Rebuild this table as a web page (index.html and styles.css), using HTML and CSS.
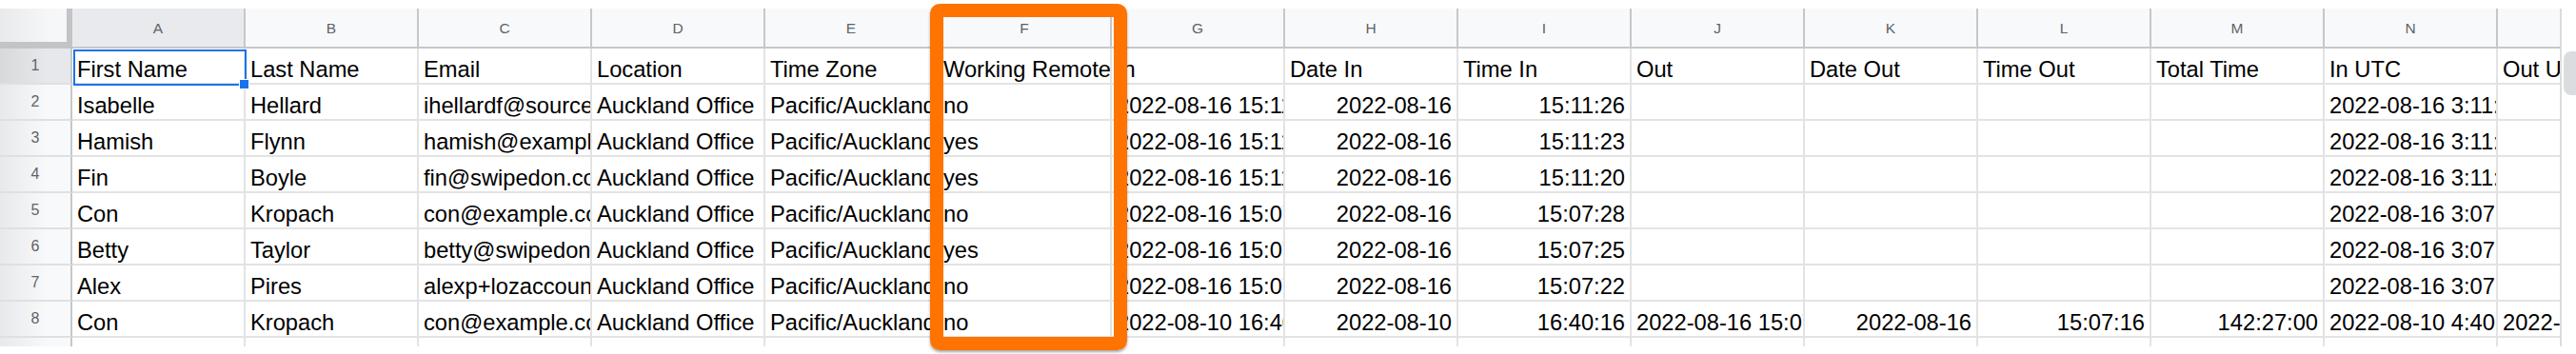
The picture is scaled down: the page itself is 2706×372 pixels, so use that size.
FILE: index.html
```html
<!DOCTYPE html>
<html lang="en">
<head>
<meta charset="utf-8">
<title>Visitor log</title>
<link rel="stylesheet" href="styles.css">
</head>
<body>
<div class="page">
  <div class="grid">
    <div class="row head">
      <div class="corner"></div>
      <div class="colhead sel">A</div>
      <div class="colhead">B</div>
      <div class="colhead">C</div>
      <div class="colhead">D</div>
      <div class="colhead">E</div>
      <div class="colhead">F</div>
      <div class="colhead">G</div>
      <div class="colhead">H</div>
      <div class="colhead">I</div>
      <div class="colhead">J</div>
      <div class="colhead">K</div>
      <div class="colhead">L</div>
      <div class="colhead">M</div>
      <div class="colhead">N</div>
      <div class="colhead">O</div>
    </div>

    <div class="row">
      <div class="rowhead sel">1</div>
      <div class="cell">First Name</div>
      <div class="cell">Last Name</div>
      <div class="cell">Email</div>
      <div class="cell">Location</div>
      <div class="cell">Time Zone</div>
      <div class="cell">Working Remote</div>
      <div class="cell">In</div>
      <div class="cell">Date In</div>
      <div class="cell">Time In</div>
      <div class="cell">Out</div>
      <div class="cell">Date Out</div>
      <div class="cell">Time Out</div>
      <div class="cell">Total Time</div>
      <div class="cell">In UTC</div>
      <div class="cell">Out UTC</div>
    </div>

    <div class="row">
      <div class="rowhead">2</div>
      <div class="cell">Isabelle</div>
      <div class="cell">Hellard</div>
      <div class="cell">ihellardf@sourceforge.net</div>
      <div class="cell">Auckland Office</div>
      <div class="cell">Pacific/Auckland</div>
      <div class="cell">no</div>
      <div class="cell">2022-08-16 15:11:26</div>
      <div class="cell num">2022-08-16</div>
      <div class="cell num">15:11:26</div>
      <div class="cell"></div>
      <div class="cell"></div>
      <div class="cell"></div>
      <div class="cell"></div>
      <div class="cell">2022-08-16 3:11:26</div>
      <div class="cell"></div>
    </div>

    <div class="row">
      <div class="rowhead">3</div>
      <div class="cell">Hamish</div>
      <div class="cell">Flynn</div>
      <div class="cell">hamish@example.com</div>
      <div class="cell">Auckland Office</div>
      <div class="cell">Pacific/Auckland</div>
      <div class="cell">yes</div>
      <div class="cell">2022-08-16 15:11:23</div>
      <div class="cell num">2022-08-16</div>
      <div class="cell num">15:11:23</div>
      <div class="cell"></div>
      <div class="cell"></div>
      <div class="cell"></div>
      <div class="cell"></div>
      <div class="cell">2022-08-16 3:11:23</div>
      <div class="cell"></div>
    </div>

    <div class="row">
      <div class="rowhead">4</div>
      <div class="cell">Fin</div>
      <div class="cell">Boyle</div>
      <div class="cell">fin@swipedon.com</div>
      <div class="cell">Auckland Office</div>
      <div class="cell">Pacific/Auckland</div>
      <div class="cell">yes</div>
      <div class="cell">2022-08-16 15:11:20</div>
      <div class="cell num">2022-08-16</div>
      <div class="cell num">15:11:20</div>
      <div class="cell"></div>
      <div class="cell"></div>
      <div class="cell"></div>
      <div class="cell"></div>
      <div class="cell">2022-08-16 3:11:20</div>
      <div class="cell"></div>
    </div>

    <div class="row">
      <div class="rowhead">5</div>
      <div class="cell">Con</div>
      <div class="cell">Kropach</div>
      <div class="cell">con@example.com</div>
      <div class="cell">Auckland Office</div>
      <div class="cell">Pacific/Auckland</div>
      <div class="cell">no</div>
      <div class="cell">2022-08-16 15:07:28</div>
      <div class="cell num">2022-08-16</div>
      <div class="cell num">15:07:28</div>
      <div class="cell"></div>
      <div class="cell"></div>
      <div class="cell"></div>
      <div class="cell"></div>
      <div class="cell">2022-08-16 3:07</div>
      <div class="cell"></div>
    </div>

    <div class="row">
      <div class="rowhead">6</div>
      <div class="cell">Betty</div>
      <div class="cell">Taylor</div>
      <div class="cell">betty@swipedon.com</div>
      <div class="cell">Auckland Office</div>
      <div class="cell">Pacific/Auckland</div>
      <div class="cell">yes</div>
      <div class="cell">2022-08-16 15:07:25</div>
      <div class="cell num">2022-08-16</div>
      <div class="cell num">15:07:25</div>
      <div class="cell"></div>
      <div class="cell"></div>
      <div class="cell"></div>
      <div class="cell"></div>
      <div class="cell">2022-08-16 3:07</div>
      <div class="cell"></div>
    </div>

    <div class="row">
      <div class="rowhead">7</div>
      <div class="cell">Alex</div>
      <div class="cell">Pires</div>
      <div class="cell">alexp+lozaccount@example.com</div>
      <div class="cell">Auckland Office</div>
      <div class="cell">Pacific/Auckland</div>
      <div class="cell">no</div>
      <div class="cell">2022-08-16 15:07:22</div>
      <div class="cell num">2022-08-16</div>
      <div class="cell num">15:07:22</div>
      <div class="cell"></div>
      <div class="cell"></div>
      <div class="cell"></div>
      <div class="cell"></div>
      <div class="cell">2022-08-16 3:07</div>
      <div class="cell"></div>
    </div>

    <div class="row">
      <div class="rowhead">8</div>
      <div class="cell">Con</div>
      <div class="cell">Kropach</div>
      <div class="cell">con@example.com</div>
      <div class="cell">Auckland Office</div>
      <div class="cell">Pacific/Auckland</div>
      <div class="cell">no</div>
      <div class="cell">2022-08-10 16:40:16</div>
      <div class="cell num">2022-08-10</div>
      <div class="cell num">16:40:16</div>
      <div class="cell">2022-08-16 15:07:16</div>
      <div class="cell num">2022-08-16</div>
      <div class="cell num">15:07:16</div>
      <div class="cell num">142:27:00</div>
      <div class="cell">2022-08-10 4:40</div>
      <div class="cell">2022-08-16 3:07:16</div>
    </div>

    <div class="row">
      <div class="rowhead">9</div>
      <div class="cell"></div>
      <div class="cell"></div>
      <div class="cell"></div>
      <div class="cell"></div>
      <div class="cell"></div>
      <div class="cell"></div>
      <div class="cell"></div>
      <div class="cell"></div>
      <div class="cell"></div>
      <div class="cell"></div>
      <div class="cell"></div>
      <div class="cell"></div>
      <div class="cell"></div>
      <div class="cell"></div>
      <div class="cell"></div>
    </div>
  </div>

  <div class="vscroll"><div class="thumb"></div></div>

  <!-- active cell outline and fill handle -->
  <div class="selection"></div>
  <div class="handle"></div>

  <!-- highlight frame around the Working Remote column -->
  <div class="callout"></div>
</div>
</body>
</html>
```

FILE: styles.css
```css
html, body {
  margin: 0;
  background: #ffffff;
}

body {
  width: 2706px;
  height: 372px;
  overflow: hidden;
  font-family: "Liberation Sans", Arial, sans-serif;
}

.page {
  position: relative;
  display: flex;
  align-items: flex-start;
  padding-top: 9px;
}

/* sheet grid */
.grid {
  width: 2689px;
  height: 355px;
  overflow: hidden;
  border-right: 2px solid #dcdcdc;
  flex: 0 0 auto;
}

.row {
  display: flex;
  height: 38px;
}

.row.head {
  height: 42px;
}

/* top-left corner with freeze bars */
.corner {
  flex: 0 0 76px;
  box-sizing: border-box;
  height: 42px;
  background: linear-gradient(90deg, #e9eaeb, #f6f7f8 55px);
  border-right: 6px solid #c3c4c6;
  border-bottom: 7px solid #c3c4c6;
}

.colhead {
  flex: 0 0 182px;
  box-sizing: border-box;
  height: 42px;
  background: #f8f9fa;
  border-right: 2px solid #c6c7c8;
  border-bottom: 2px solid #c6c7c8;
  display: flex;
  align-items: center;
  justify-content: center;
  font-size: 15.5px;
  color: #5f6368;
  padding-top: 1px;
}

.colhead.sel {
  background: #e8eaed;
}

.rowhead {
  flex: 0 0 76px;
  box-sizing: border-box;
  height: 38px;
  background: linear-gradient(90deg, #e8e9ea, #f8f9fa 50px);
  border-right: 2px solid #c6c7c8;
  border-bottom: 2px solid #dfe0e1;
  display: flex;
  align-items: center;
  justify-content: center;
  font-size: 16px;
  color: #5f6368;
}

.rowhead.sel {
  background: linear-gradient(90deg, #d8d9db, #e6e8eb 50px);
}

.cell {
  flex: 0 0 182px;
  box-sizing: border-box;
  height: 38px;
  border-right: 2px solid #e3e3e3;
  border-bottom: 2px solid #e3e3e3;
  padding: 9px 5px 0 5px;
  font-size: 23.7px;
  line-height: 26px;
  color: #000000;
  white-space: nowrap;
  overflow: hidden;
}

.cell.num {
  text-align: right;
}

/* vertical scrollbar */
.vscroll {
  flex: 0 0 15px;
  height: 355px;
  padding-top: 45px;
  box-sizing: border-box;
}

.thumb {
  margin-left: 2px;
  width: 20px;
  height: 46px;
  background: #dadce0;
  border-radius: 8px;
}

/* active cell */
.selection {
  position: absolute;
  left: 77px;
  top: 52px;
  width: 182px;
  height: 38px;
  box-sizing: border-box;
  border: 2px solid #1a73e8;
}

.handle {
  position: absolute;
  left: 251px;
  top: 83px;
  width: 9px;
  height: 9px;
  background: #1a73e8;
  border: 1px solid #ffffff;
}

/* orange frame */
.callout {
  position: absolute;
  left: 977px;
  top: 4px;
  width: 207px;
  height: 364px;
  box-sizing: border-box;
  border: 14px solid #ff7300;
  border-radius: 10px;
  box-shadow: 0 2px 3px rgba(0, 0, 0, 0.35);
}
```
